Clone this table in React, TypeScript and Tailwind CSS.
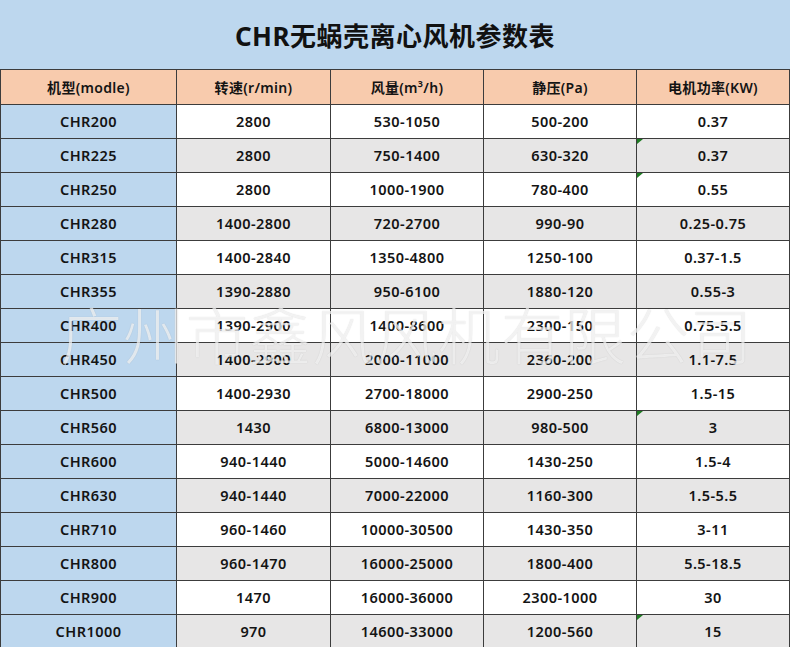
const HEADERS = ["机型(modle)", "转速(r/min)", "风量(m³/h)", "静压(Pa)", "电机功率(KW)"];

const ROWS = [
  ["CHR200", "2800", "530-1050", "500-200", "0.37"],
  ["CHR225", "2800", "750-1400", "630-320", "0.37"],
  ["CHR250", "2800", "1000-1900", "780-400", "0.55"],
  ["CHR280", "1400-2800", "720-2700", "990-90", "0.25-0.75"],
  ["CHR315", "1400-2840", "1350-4800", "1250-100", "0.37-1.5"],
  ["CHR355", "1390-2880", "950-6100", "1880-120", "0.55-3"],
  ["CHR400", "1390-2900", "1400-8600", "2300-150", "0.75-5.5"],
  ["CHR450", "1400-2900", "2000-11000", "2360-200", "1.1-7.5"],
  ["CHR500", "1400-2930", "2700-18000", "2900-250", "1.5-15"],
  ["CHR560", "1430", "6800-13000", "980-500", "3"],
  ["CHR600", "940-1440", "5000-14600", "1430-250", "1.5-4"],
  ["CHR630", "940-1440", "7000-22000", "1160-300", "1.5-5.5"],
  ["CHR710", "960-1460", "10000-30500", "1430-350", "3-11"],
  ["CHR800", "960-1470", "16000-25000", "1800-400", "5.5-18.5"],
  ["CHR900", "1470", "16000-36000", "2300-1000", "30"],
  ["CHR1000", "970", "14600-33000", "1200-560", "15"],
];

// 行号（0 起）：最后一列左上角有绿色小三角
const FLAGGED = [1, 2, 9, 15];

export default function App() {
  return (
    <div
      className="relative w-[790px] h-[647px] overflow-hidden bg-white text-[#141414]"
      style={{ fontFamily: '"Noto Sans", "Noto Sans CJK SC", sans-serif' }}
    >
      {/* 标题 */}
      <div className="flex h-[69px] items-center justify-center bg-[#bdd7ee]">
        <h1 className="pt-[4px] text-[26px] font-bold tracking-[0.5px] text-[#111]">
          CHR无蜗壳离心风机参数表
        </h1>
      </div>

      {/* 表格 */}
      <div className="grid grid-cols-[175px_153px_152px_152px_152px] gap-px bg-[#3c3c3c] p-px">
        {HEADERS.map((h) => (
          <div
            key={h}
            className="flex h-[34px] items-center justify-center bg-[#f8cbad] text-[14px] font-semibold tracking-[0.3px]"
          >
            {h}
          </div>
        ))}
        {ROWS.map((row, i) =>
          row.map((cell, j) => (
            <div
              key={`${i}-${j}`}
              className={`relative flex h-[33px] items-center justify-center text-[14.5px] font-semibold tracking-[0.45px] ${
                j === 0 ? "bg-[#bdd7ee]" : i % 2 === 0 ? "bg-white" : "bg-[#e7e6e6]"
              }`}
            >
              {cell}
              {j === 4 && FLAGGED.includes(i) && (
                <span className="absolute left-0 top-0 h-0 w-0 border-l-[6px] border-b-[5px] border-l-[#1e7b22] border-b-transparent" />
              )}
            </div>
          ))
        )}
      </div>

      {/* 水印 */}
      <div
        className="pointer-events-none absolute left-[60px] top-[302px] whitespace-nowrap text-[62px] font-light leading-none tracking-[1px] text-white/70"
        style={{
          fontFamily: '"Noto Sans CJK SC", sans-serif',
          textShadow: "0 0 1px rgba(0,0,0,0.18)",
        }}
        aria-hidden="true"
      >
        广州市鑫风风机有限公司
      </div>
    </div>
  );
}
